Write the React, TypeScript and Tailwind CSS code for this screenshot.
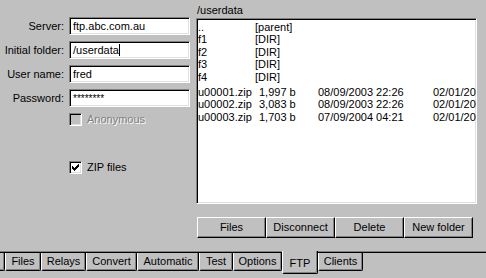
import React from 'react';

const sunken =
    'border border-t-[#808080] border-l-[#808080] border-b-white border-r-white shadow-[inset_1px_1px_0_#000,inset_-1px_-1px_0_#dfdfdf]';
const raised =
    'border border-t-white border-l-white border-b-black border-r-black shadow-[inset_-1px_-1px_0_#808080]';

const fields = [
    { label: 'Server:', value: 'ftp.abc.com.au' },
    { label: 'Initial folder:', value: '/userdata', caret: true },
    { label: 'User name:', value: 'fred' },
    { label: 'Password:', value: '********', secret: true },
];

const dirs = [
    { name: '..', info: '[parent]' },
    { name: 'f1', info: '[DIR]' },
    { name: 'f2', info: '[DIR]' },
    { name: 'f3', info: '[DIR]' },
    { name: 'f4', info: '[DIR]' },
];

const zips = [
    { name: 'u00001.zip', size: '1,997 b', date: '08/09/2003 22:26', other: '02/01/2004 10:12' },
    { name: 'u00002.zip', size: '3,083 b', date: '08/09/2003 22:26', other: '02/01/2004 10:12' },
    { name: 'u00003.zip', size: '1,703 b', date: '07/09/2004 04:21', other: '02/01/2004 10:12' },
];

const tabs = [
    { label: 'Files', w: 'w-[36px]' },
    { label: 'Relays', w: 'w-[45px]' },
    { label: 'Convert', w: 'w-[51px]' },
    { label: 'Automatic', w: 'w-[62px]' },
    { label: 'Test', w: 'w-[34px]' },
    { label: 'Options', w: 'w-[49px]' },
    { label: 'FTP', w: 'w-[36px]', active: true },
    { label: 'Clients', w: 'w-[45px]' },
];

function Check() {
    const cols = [2, 3, 4, 3, 2, 1, 0];
    return (
        <svg width="7" height="7" viewBox="0 0 7 7" shapeRendering="crispEdges">
            {cols.map((y, x) => (
                <rect key={x} x={x} y={y} width="1" height="3" fill="#000" />
            ))}
        </svg>
    );
}

function Checkbox({ label, checked, disabled }: { label: string; checked?: boolean; disabled?: boolean }) {
    return (
        <div className="flex items-center h-[13px] pl-[69px]">
            <div
                className={`w-[13px] h-[13px] flex items-center justify-center ${sunken} ${
                    disabled ? 'bg-[#c0c0c0]' : 'bg-white'
                }`}
            >
                {checked && <Check />}
            </div>
            <span
                className={`ml-[5px] leading-[13px] ${
                    disabled ? 'text-[#808080] [text-shadow:1px_1px_0_#fff]' : 'text-black'
                }`}
            >
                {label}
            </span>
        </div>
    );
}

export default function App() {
    return (
        <div className="w-[486px] h-[278px] overflow-hidden bg-[#c0c0c0] text-black text-[11px] font-['Liberation_Sans',Arial,sans-serif] select-none">
            {/* Page */}
            <div className="h-[251px] flex">
                {/* Left: connection settings */}
                <div className="w-[196px] pt-[17px]">
                    <div className="flex flex-col gap-[6px]">
                        {fields.map((f) => (
                            <div key={f.label} className="flex items-center h-[18px]">
                                <span className="w-[64px] text-right whitespace-nowrap">{f.label}</span>
                                <div className={`ml-[5px] w-[121px] h-[18px] bg-white flex items-center pl-[3px] ${sunken}`}>
                                    {f.secret ? (
                                        <span className="text-[10px] leading-[10px] translate-y-[1px]">{f.value}</span>
                                    ) : (
                                        <span className="whitespace-nowrap flex items-center">
                                            {f.value}
                                            {f.caret && <span className="inline-block w-px h-[12px] bg-black" />}
                                        </span>
                                    )}
                                </div>
                            </div>
                        ))}
                    </div>
                    <div className="mt-[6px]">
                        <Checkbox label="Anonymous" disabled />
                    </div>
                    <div className="mt-[35px]">
                        <Checkbox label="ZIP files" checked />
                    </div>
                </div>

                {/* Right: remote listing */}
                <div className="flex flex-col">
                    <div className="mt-[4px] pl-[1px] h-[13px] leading-[13px]">/userdata</div>
                    <div className={`mt-[1px] w-[281px] h-[186px] bg-white overflow-hidden pt-[2px] ${sunken}`}>
                        {dirs.map((d) => (
                            <div key={d.name} className="flex leading-[12.4px] whitespace-nowrap pl-[1px]">
                                <span className="w-[57px] shrink-0">{d.name}</span>
                                <span>{d.info}</span>
                            </div>
                        ))}
                        <div className="mt-[3px]">
                            {zips.map((z) => (
                                <div key={z.name} className="flex leading-[12.4px] whitespace-nowrap pl-[1px]">
                                    <span className="w-[61px] shrink-0">{z.name}</span>
                                    <span className="w-[59px] shrink-0">{z.size}</span>
                                    <span className="w-[115px] shrink-0">{z.date}</span>
                                    <span className="shrink-0">{z.other}</span>
                                </div>
                            ))}
                        </div>
                    </div>
                    <div className="mt-[13px] ml-[1px] flex">
                        {['Files', 'Disconnect', 'Delete', 'New folder'].map((b) => (
                            <div key={b} className={`w-[69px] h-[21px] flex items-center justify-center ${raised}`}>
                                {b}
                            </div>
                        ))}
                    </div>
                </div>
            </div>

            {/* Page edge */}
            <div className="h-px bg-[#808080]" />
            <div className="h-px bg-black" />

            {/* Tabs */}
            <div className="flex items-start">
                <div className="w-[5px] h-[18px] border-r border-b border-black rounded-br-[2px] shadow-[inset_-1px_-1px_0_#808080]" />
                {tabs.map((t) =>
                    t.active ? (
                        <div
                            key={t.label}
                            className={`${t.w} h-[23px] -mt-[2px] relative z-10 bg-[#c0c0c0] border-l border-l-white border-r border-r-black border-b border-b-black rounded-b-[2px] shadow-[inset_-1px_-1px_0_#808080] flex items-center justify-center pt-[3px]`}
                        >
                            {t.label}
                        </div>
                    ) : (
                        <div
                            key={t.label}
                            className={`${t.w} h-[18px] border-l border-l-white border-r border-r-black border-b border-b-black rounded-b-[2px] shadow-[inset_-1px_-1px_0_#808080] flex items-center justify-center`}
                        >
                            {t.label}
                        </div>
                    )
                )}
            </div>
        </div>
    );
}
